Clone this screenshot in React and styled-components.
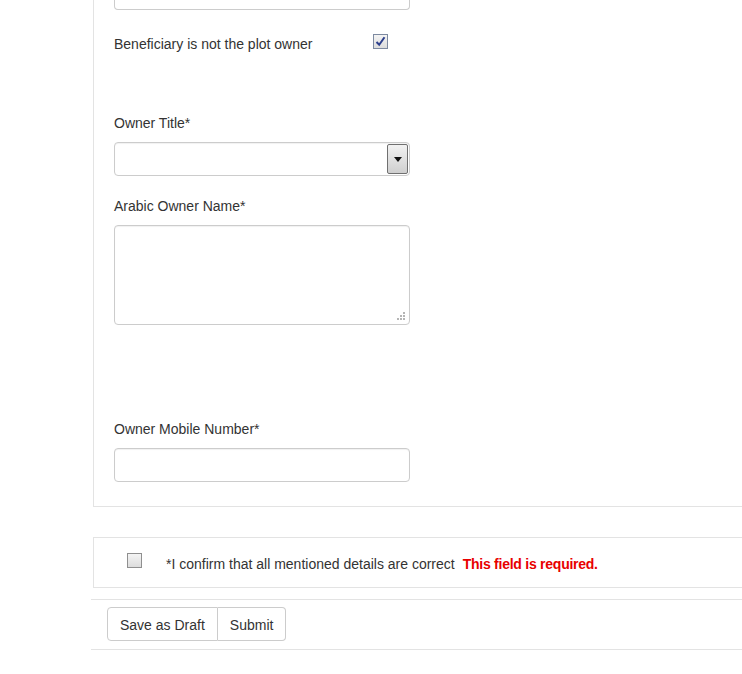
import React from 'react'
import styled, { createGlobalStyle } from 'styled-components'

const GlobalStyle = createGlobalStyle`
    body {
        margin: 0;
        background: #fff;
        font-family: "Liberation Sans", Arial, sans-serif;
        font-size: 14px;
        color: #333;
    }
    * { box-sizing: border-box; }
`

const Page = styled.div`
    width: 742px;
    height: 674px;
    overflow: hidden;
`

const FieldsPanel = styled.div`
    margin-left: 93px;
    border-left: 1px solid #e3e3e3;
    border-bottom: 1px solid #e3e3e3;
    padding: 0 0 24px 20px;
`

const FieldBox = styled.div`
    width: 296px;
    height: ${props => props.h || 34}px;
    border: 1px solid #ccc;
    border-radius: 4px;
    background: #fff;
    box-shadow: inset 0 1px 1px rgba(0,0,0,0.06);
    display: flex;
    justify-content: flex-end;
    align-items: ${props => props.grip ? 'flex-end' : 'stretch'};
    padding: 1px;
`

const CutBox = styled(FieldBox)`
    height: 10px;
    border-top: none;
    border-radius: 0 0 4px 4px;
    box-shadow: none;
`

const CheckRow = styled.div`
    display: flex;
    align-items: center;
    margin-top: 24px;
    height: 20px;
`

const CheckLabel = styled.span`
    width: 259px;
    line-height: 20px;
`

const Label = styled.div`
    line-height: 20px;
    margin-top: ${props => props.top || 20}px;
    margin-bottom: 9px;
`

const Box = styled.span`
    width: 15px;
    height: 15px;
    flex: none;
    border: 1px solid ${props => props.checked ? '#7d8aa0' : '#8f8f8f'};
    background: linear-gradient(#f4f4f4, #dcdcdc);
    display: flex;
    align-items: center;
    justify-content: center;
    margin-top: ${props => props.shift || 0}px;
`

const DropButton = styled.div`
    width: 21px;
    border: 1px solid #707070;
    border-radius: 2px;
    background: linear-gradient(#f2f2f2, #cfcfcf);
    display: flex;
    align-items: center;
    justify-content: center;
`

const Caret = styled.span`
    width: 0;
    height: 0;
    border-left: 4px solid transparent;
    border-right: 4px solid transparent;
    border-top: 5px solid #111;
`

const Grip = styled.svg`
    margin: 0 2px 2px 0;
`

const ConfirmPanel = styled.div`
    margin: 30px 0 0 93px;
    border-left: 1px solid #e3e3e3;
    border-top: 1px solid #e3e3e3;
    border-bottom: 1px solid #e3e3e3;
    height: 51px;
    display: flex;
    align-items: center;
    padding-left: 33px;
`

const ConfirmText = styled.span`
    margin-left: 24px;
    margin-top: 2px;
    line-height: 20px;
`

const ErrorText = styled.b`
    color: #e80000;
    margin-left: 8px;
    letter-spacing: -0.25px;
`

const ButtonBar = styled.div`
    margin: 11px 0 0 91px;
    border-top: 1px solid #e3e3e3;
    border-bottom: 1px solid #e3e3e3;
    padding: 7px 16px 8px;
    display: flex;
`

const Button = styled.button`
    font-family: inherit;
    font-size: 14px;
    color: #333;
    background: #fff;
    height: 34px;
    padding: 1px 12px 0;
    border: 1px solid #ccc;
    border-left-width: ${props => props.first ? 1 : 0}px;
    border-radius: ${props => props.first ? '4px 0 0 4px' : '0 4px 4px 0'};
    cursor: pointer;
`

function CheckBox({ checked, shift }) {
    return (
        <Box checked={checked} shift={shift}>
            {checked && (
                <svg width="11" height="11" viewBox="0 0 11 11">
                    <path d="M1.5 6 L4.2 8.8 L9.5 1.2" fill="none" stroke="#2c3f8c" strokeWidth="2" />
                </svg>
            )}
        </Box>
    )
}

export default function App() {
    const dots = [[7, 1], [4, 4], [7, 4], [1, 7], [4, 7], [7, 7]]
    return (
        <Page>
            <GlobalStyle />
            <FieldsPanel>
                <CutBox />
                <CheckRow>
                    <CheckLabel>Beneficiary is not the plot owner</CheckLabel>
                    <CheckBox checked shift={-5} />
                </CheckRow>
                <Label top={59}>Owner Title*</Label>
                <FieldBox>
                    <DropButton><Caret /></DropButton>
                </FieldBox>
                <Label>Arabic Owner Name*</Label>
                <FieldBox h={100} grip>
                    <Grip width="10" height="10" viewBox="0 0 10 10">
                        {dots.map(([x, y]) => (
                            <rect key={x + '-' + y} x={x} y={y} width="2" height="2" fill="#b5b5b5" />
                        ))}
                    </Grip>
                </FieldBox>
                <Label top={94}>Owner Mobile Number*</Label>
                <FieldBox />
            </FieldsPanel>
            <ConfirmPanel>
                <CheckBox shift={-5} />
                <ConfirmText>
                    *I confirm that all mentioned details are correct
                    <ErrorText>This field is required.</ErrorText>
                </ConfirmText>
            </ConfirmPanel>
            <ButtonBar>
                <Button first>Save as Draft</Button>
                <Button>Submit</Button>
            </ButtonBar>
        </Page>
    )
}
